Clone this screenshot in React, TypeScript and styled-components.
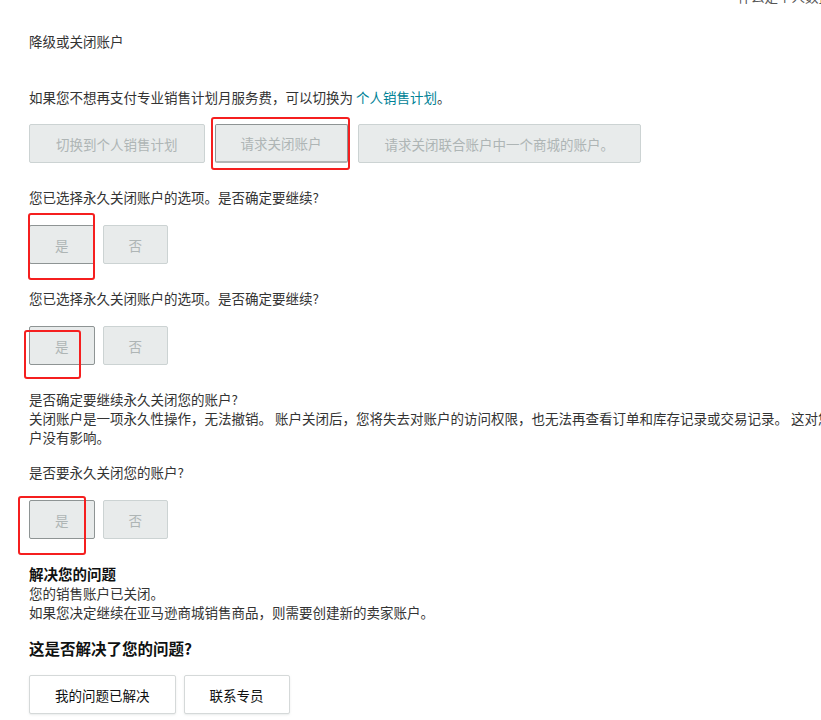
import React from "react";
import styled, { createGlobalStyle, css } from "styled-components";

const GlobalStyle = createGlobalStyle`
  html, body {
    margin: 0;
    padding: 0;
    background: #ffffff;
    overflow-x: hidden;
  }
  body {
    font-family: "Noto Sans CJK SC", "Noto Sans", sans-serif;
    font-size: 13.5px;
    line-height: 19px;
    color: #333333;
  }
`;

const Page = styled.div`
  padding: 0 0 40px 29px;
`;

const TopStrip = styled.div`
  height: 6px;
  overflow: hidden;
  display: flex;
  justify-content: flex-end;
  margin-right: -11px;
`;

const TopText = styled.span`
  margin-top: -13px;
  white-space: nowrap;
  color: #555;
`;

const Text = styled.div<{ $mt?: number }>`
  margin-top: ${(p) => p.$mt ?? 0}px;
  white-space: nowrap;
`;

const Link = styled.a`
  color: #008296;
  text-decoration: none;
  cursor: pointer;
`;

const Heading = styled.div<{ $mt?: number; $size?: number }>`
  margin-top: ${(p) => p.$mt ?? 0}px;
  font-size: ${(p) => p.$size ?? 14.5}px;
  line-height: 20px;
  font-weight: 700;
  color: #0f1111;
`;

const Row = styled.div<{ $mt?: number; $gap?: number }>`
  display: flex;
  gap: ${(p) => p.$gap ?? 8}px;
  margin-top: ${(p) => p.$mt ?? 0}px;
`;

type Variant = "disabled" | "selected" | "focused" | "white";

const Btn = styled.button<{ $variant?: Variant; $pad?: number }>`
  height: 39px;
  padding: 0 ${(p) => p.$pad ?? 25}px;
  box-sizing: border-box;
  font-family: inherit;
  font-size: 13.5px;
  border-radius: 2px;
  cursor: pointer;
  background: #e8ebeb;
  border: 1px solid #ccd3d3;
  color: #aeb5b5;
  ${(p) =>
    p.$variant === "selected" &&
    css`
      border-color: #8e9494;
    `}
  ${(p) =>
    p.$variant === "focused" &&
    css`
      border-color: #8e9494;
      border-bottom: 2px solid #b3b7b7;
    `}
  ${(p) =>
    p.$variant === "white" &&
    css`
      background: #ffffff;
      border-color: #d5d9d9;
      color: #0f1111;
      box-shadow: 0 1px 2px rgba(213, 217, 217, 0.5);
    `}
`;

const Marked = styled.div`
  position: relative;
  display: flex;
`;

const RedBox = styled.div<{ $l: number; $t: number; $w: number; $h: number }>`
  position: absolute;
  left: ${(p) => p.$l}px;
  top: ${(p) => p.$t}px;
  width: ${(p) => p.$w}px;
  height: ${(p) => p.$h}px;
  box-sizing: border-box;
  border: 2px solid #f51f1f;
  border-radius: 3px;
  pointer-events: none;
`;

const App: React.FC = () => {
  return (
    <>
      <GlobalStyle />
      <Page>
        <TopStrip>
          <TopText>什么是个人数据</TopText>
        </TopStrip>

        <Text $mt={26}>降级或关闭账户</Text>

        <Text $mt={37}>
          如果您不想再支付专业销售计划月服务费，可以切换为 <Link>个人销售计划</Link>。
        </Text>

        <Row $mt={17} $gap={10}>
          <Btn $pad={26}>切换到个人销售计划</Btn>
          <Marked>
            <Btn $variant="focused">请求关闭账户</Btn>
            <RedBox $l={-4} $t={-7} $w={139} $h={53} />
          </Marked>
          <Btn $pad={26}>请求关闭联合账户中一个商城的账户。</Btn>
        </Row>

        <Text $mt={25}>您已选择永久关闭账户的选项。是否确定要继续?</Text>
        <Row $mt={18}>
          <Marked>
            <Btn $variant="selected">是</Btn>
            <RedBox $l={-1} $t={-12} $w={67} $h={67} />
          </Marked>
          <Btn>否</Btn>
        </Row>

        <Text $mt={25}>您已选择永久关闭账户的选项。是否确定要继续?</Text>
        <Row $mt={18}>
          <Marked>
            <Btn $variant="selected">是</Btn>
            <RedBox $l={-5} $t={4} $w={57} $h={49} />
          </Marked>
          <Btn>否</Btn>
        </Row>

        <Text $mt={25}>
          是否确定要继续永久关闭您的账户?
          <br />
          关闭账户是一项永久性操作，无法撤销。 账户关闭后，您将失去对账户的访问权限，也无法再查看订单和库存记录或交易记录。 这对您的其他账
          <br />
          户没有影响。
        </Text>

        <Text $mt={16}>是否要永久关闭您的账户?</Text>
        <Row $mt={18}>
          <Marked>
            <Btn $variant="selected">是</Btn>
            <RedBox $l={-11} $t={-4} $w={68} $h={59} />
          </Marked>
          <Btn>否</Btn>
        </Row>

        <Heading $mt={25}>解决您的问题</Heading>
        <Text>您的销售账户已关闭。</Text>
        <Text>如果您决定继续在亚马逊商城销售商品，则需要创建新的卖家账户。</Text>

        <Heading $mt={16} $size={15.5}>
          这是否解决了您的问题?
        </Heading>
        <Row $mt={17}>
          <Btn $variant="white">我的问题已解决</Btn>
          <Btn $variant="white">联系专员</Btn>
        </Row>
      </Page>
    </>
  );
};

export default App;
